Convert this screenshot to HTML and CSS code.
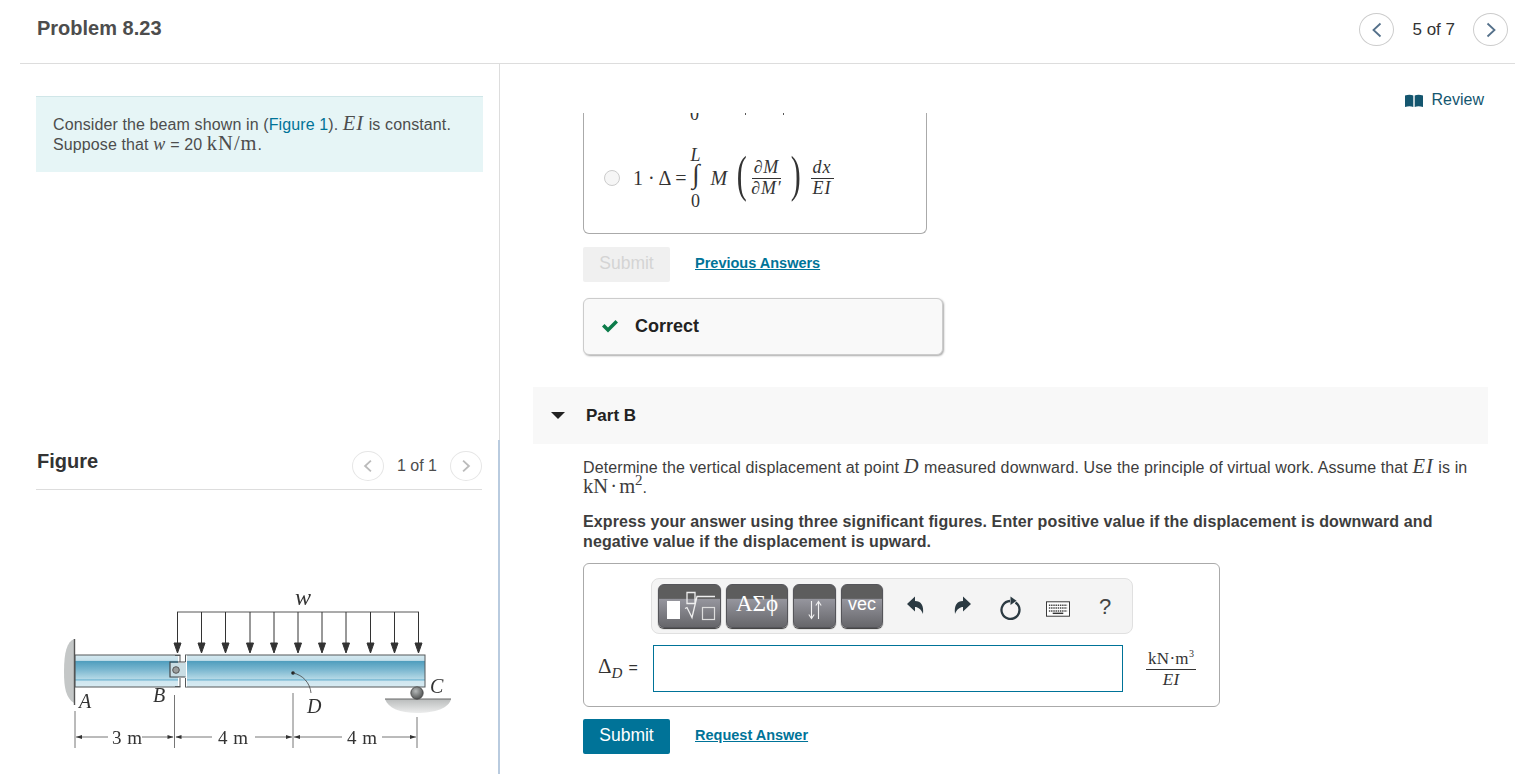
FILE: index.html
```html
<!DOCTYPE html>
<html lang="en">
<head>
<meta charset="utf-8">
<title>Problem 8.23</title>
<link rel="stylesheet" href="styles.css">
</head>
<body>
<header class="top">
  <h1 class="title">Problem 8.23</h1>
  <nav class="pager">
    <span class="circle"><svg width="12" height="16" viewBox="0 0 12 16"><path d="M9.5 1.5 2.5 8l7 6.5" class="chev"/></svg></span>
    <span class="pager-text">5 of 7</span>
    <span class="circle"><svg width="12" height="16" viewBox="0 0 12 16"><path d="M2.5 1.5 9.5 8l-7 6.5" class="chev"/></svg></span>
  </nav>
</header>
<div class="main">
  <aside class="left">
    <section class="left-top">
      <div class="intro">
        Consider the beam shown in (<a class="plain-link">Figure 1</a>). <span class="m i big">EI</span> is constant.<br>
        Suppose that <span class="m i var">w</span> = 20 <span class="m big">kN/m</span>.
      </div>
    </section>
    <section class="left-fig">
      <div class="fig-head">
        <h2 class="fig-title">Figure</h2>
        <div class="fig-pager">
          <span class="circle small"><svg width="10" height="14" viewBox="0 0 12 16"><path d="M9.5 1.5 2.5 8l7 6.5" class="chev faded"/></svg></span>
          <span class="fig-count">1 of 1</span>
          <span class="circle small"><svg width="10" height="14" viewBox="0 0 12 16"><path d="M2.5 1.5 9.5 8l-7 6.5" class="chev faded"/></svg></span>
        </div>
      </div>
      <svg class="beam" width="460" height="194" viewBox="0 0 460 194">
        <defs>
          <linearGradient id="bg" x1="0" y1="0" x2="0" y2="1">
            <stop offset="0" stop-color="#d5e9f0"/><stop offset=".17" stop-color="#c6e0ea"/>
            <stop offset=".19" stop-color="#4f9dbd"/><stop offset=".45" stop-color="#79b6cf"/>
            <stop offset=".75" stop-color="#b5d9e6"/><stop offset=".78" stop-color="#59a8cb"/>
            <stop offset=".81" stop-color="#cfe6ef"/><stop offset="1" stop-color="#d8ebf2"/>
          </linearGradient>
          <linearGradient id="gr" x1="0" y1="0" x2="0" y2="1">
            <stop offset="0" stop-color="#b9bcbc"/><stop offset="1" stop-color="#eceded"/>
          </linearGradient>
          <radialGradient id="ball" cx=".4" cy=".35" r=".7">
            <stop offset="0" stop-color="#b5b8b8"/><stop offset="1" stop-color="#4a4c4c"/>
          </radialGradient>
          <path id="ar" d="M0 0V34M-3.5 31 0 41l3.5-10z"/>
        </defs>
        <g class="soft">
          <path d="M54 59C47 62 44 72 44 92c0 16 2 26 10 31z" fill="#c4c7c7"/>
          <rect x="55" y="75" width="105" height="32" fill="url(#bg)" stroke="#55595b" stroke-width="1"/>
          <rect x="165.500" y="75" width="239.500" height="32" fill="url(#bg)" stroke="#55595b" stroke-width="1"/>
          <rect x="158" y="75.500" width="9" height="31" fill="#fff"/>
          <path d="M160 75v7M160 107v-9M165.500 75v7M165.500 107v-9M160 75.500H155M160 106.500H155" fill="none" stroke="#55595b"/>
          <rect x="150" y="83" width="16" height="14" fill="#c9dde4"/>
          <path d="M160 82h-10v15h10M160 82h5.500M160 97h5.500" fill="none" stroke="#45494b" stroke-width="1.200"/>
          <circle cx="156" cy="90" r="3.300" fill="#9a9d9d" stroke="#555"/>
          <path d="M54.500 59V125" stroke="#555" stroke-width="1.400"/>
          <path d="M157 32H399" stroke="#444" stroke-width=".9"/>
          <g fill="#333" stroke="#333" stroke-width="1">
            <use href="#ar" x="157.500" y="32"/><use href="#ar" x="181.500" y="32"/><use href="#ar" x="205.500" y="32"/>
            <use href="#ar" x="230" y="32"/><use href="#ar" x="254" y="32"/><use href="#ar" x="278" y="32"/>
            <use href="#ar" x="302" y="32"/><use href="#ar" x="326" y="32"/><use href="#ar" x="350.500" y="32"/>
            <use href="#ar" x="374.500" y="32"/><use href="#ar" x="398.500" y="32"/>
          </g>
          <path d="M365 119H431C429 128 415 133 397 133 380 133 368 128 365 119z" fill="url(#gr)"/>
          <path d="M365 119H431" stroke="#666" stroke-width="1"/>
          <circle cx="397" cy="113" r="6.200" fill="url(#ball)" stroke="#444" stroke-width=".8"/>
          <circle cx="273" cy="93" r="1.800" fill="#222"/>
          <path d="M273 93C283 95 290 103 291 113" fill="none" stroke="#444" stroke-width=".8"/>
          <g stroke="#666" stroke-width=".9" fill="none">
            <path d="M55 131V168M154.500 115V168M273 113V168M397 137V168"/>
            <path d="M56 157H88M122 157H153M156 157H192M235 157H272M274 157H322M362 157H396"/>
          </g>
          <g fill="#333">
            <path d="M56 157l6-2v4zM153.500 157l-6-2v4zM155.500 157l6-2v4zM272 157l-6-2v4zM274 157l6-2v4zM396 157l-6-2v4z"/>
          </g>
          <g class="fig-label">
            <text x="275" y="25" class="fl-w">w</text>
            <text x="59" y="128">A</text>
            <text x="133" y="122">B</text>
            <text x="287" y="133">D</text>
            <text x="410" y="113">C</text>
          </g>
          <g class="fig-dim">
            <text x="92" y="164">3 m</text>
            <text x="198" y="164">4 m</text>
            <text x="327" y="164">4 m</text>
          </g>
        </g>
      </svg>
    </section>
  </aside>
  <main class="right">
    <div class="review-row">
      <a class="review"><svg width="18" height="13" viewBox="0 0 18 13"><path d="M0 1.500C3 .5 6 .5 8.300 1.500V13C6 12 3 12 0 13zM9.700 1.500C12 .5 15 .5 18 1.500V13C15 12 12 12 9.700 13z" fill="#14566f"/></svg>Review</a>
    </div>
    <div class="indent">
      <div class="clip">
        <div class="choices">
          <div class="cut-line"><span class="m cut-zero">0</span><span class="speck s1"></span><span class="speck s2"></span></div>
          <div class="choice">
            <span class="radio"></span>
            <span class="m eq">1 · Δ =</span>
            <span class="integral m"><span class="i lim">L</span><span class="int-sign">∫</span><span class="lim">0</span></span>
            <span class="m i eq-m">M</span>
            <span class="m paren">(</span>
            <span class="frac m"><span class="num">∂<span class="i">M</span></span><span class="den">∂<span class="i">M′</span></span></span>
            <span class="m paren">)</span>
            <span class="frac m gap-l"><span class="num i">dx</span><span class="den i">EI</span></span>
          </div>
        </div>
      </div>
      <div class="actions actions-first">
        <button class="btn disabled">Submit</button>
        <a class="link-bold">Previous Answers</a>
      </div>
      <div class="correct">
        <svg width="18" height="14" viewBox="0 0 18 14"><path d="M1 7.500 3.500 5l3.500 3.500L14.500 1 17 3.500 7 13.500z" fill="#0c7c4a"/></svg>
        <span>Correct</span>
      </div>
    </div>
    <div class="part-bar">
      <span class="tri"></span>
      <span class="part-name">Part B</span>
    </div>
    <div class="indent part-body">
      <p class="q">Determine the vertical displacement at point <span class="m i big">D</span> measured downward. Use the principle of virtual work. Assume that <span class="m i big">EI</span> is in <span class="m big nowrap tight">kN · m<sup class="sup">2</sup></span>.</p>
      <p class="q-bold">Express your answer using three significant figures. Enter positive value if the displacement is downward and negative value if the displacement is upward.</p>
      <div class="answer">
        <div class="toolbar">
          <button class="tb w-a">
            <span class="tpl-block"></span>
            <span class="tpl-root">
              <svg width="32" height="30" viewBox="0 0 32 30"><path d="M3 1.500h8v11H3zM1 17.500l2-1 5 10L13 5.500h18" fill="none" stroke="#eee" stroke-width="1.300"/><rect x="18.500" y="16.500" width="12" height="12" fill="none" stroke="#ddd" stroke-width="1.200"/></svg>
            </span>
          </button>
          <button class="tb w-b"><span class="greek">ΑΣϕ</span></button>
          <button class="tb w-c"><svg width="14" height="20" viewBox="0 0 14 20"><path d="M3.500 1V18.500M.8 14.500 3.500 18.500 6.200 14.500M10.500 19V1.500M7.800 5.500 10.500 1.500 13.200 5.500" fill="none" stroke="#f2f2f2" stroke-width="1.100"/></svg></button>
          <button class="tb w-d">vec</button>
          <span class="tool t1"><svg width="18" height="20" viewBox="0 0 18 20"><path d="M1 9 9 1.500V6c6 0 9 4 8 13-2-5-5-7-8-7v4.500z" fill="#2b3a42"/></svg></span>
          <span class="tool t2"><svg width="18" height="20" viewBox="0 0 18 20"><path d="M17 9 9 1.500V6C3 6 0 10 1 19c2-5 5-7 8-7v4.500z" fill="#2b3a42"/></svg></span>
          <span class="tool t3"><svg width="22" height="24" viewBox="0 0 22 24"><path d="M15.500 6.500A9 9 0 1 1 10 5" fill="none" stroke="#2b3a42" stroke-width="2.300"/><path d="M10.500 .5 16.500 4.700 10.500 9z" fill="#2b3a42"/></svg></span>
          <span class="tool t4"><svg width="25" height="16" viewBox="0 0 25 16"><rect x=".5" y=".5" width="24" height="15" fill="#fff" stroke="#333"/><path d="M3 4h19M3 7h19M3 10h19" stroke="#444" stroke-width="1.500" stroke-dasharray="1.500 .8"/><path d="M7 12.500h11" stroke="#333" stroke-width="1.500"/></svg></span>
          <span class="tool t5">?</span>
        </div>
        <div class="answer-row">
          <span class="m delta">Δ<sub class="i sub-d">D</sub> <span class="eqs">=</span></span>
          <input class="ans-input" type="text" aria-label="answer">
          <span class="frac m unit"><span class="num">kN·m<sup class="sup3">3</sup></span><span class="den i">EI</span></span>
        </div>
      </div>
      <div class="actions">
        <button class="btn primary">Submit</button>
        <a class="link-bold">Request Answer</a>
      </div>
    </div>
  </main>
</div>
</body>
</html>
```
FILE: styles.css
```css
* { box-sizing: border-box; }
html, body { margin: 0; height: 774px; overflow: hidden; background: #fff; }
body { font-family: "Liberation Sans", Arial, sans-serif; font-size: 16px; color: #333; line-height: 20px; }

.top { margin-left: 20px; height: 64px; border-bottom: 1px solid #ddd; display: flex; align-items: center; justify-content: space-between; padding: 0 7px 8px 17px; }
.title { margin: 0; font-size: 20px; font-weight: 700; color: #4d4d4d; line-height: 24px; }
.pager { display: flex; align-items: center; gap: 18px; margin-top: 4px; }
.pager-text { font-size: 17px; color: #333; }
.circle { width: 35px; height: 33px; border: 1px solid #ccc; border-radius: 50%; display: flex; align-items: center; justify-content: center; background: #fff; }
.circle.small { width: 32px; height: 30px; border-color: #e6e6e6; }
.chev { fill: none; stroke: #54708a; stroke-width: 1.800; }
.chev.faded { stroke: #bbb; stroke-width: 2.200; }

.main { display: flex; height: 710px; }
.left { width: 500px; display: flex; flex-direction: column; flex: none; }
.left-top { height: 376px; padding: 32px 16px 0 36px; border-right: 1px solid #ddd; }
.intro { background: #e6f5f6; border-top: 1px solid #d0e6e8; height: 76px; padding: 18px 17px; color: #4d4d4d; letter-spacing: .11px; }
.plain-link { color: #007398; }
.left-fig { flex: 1; padding: 0 16px 0 36px; border-right: 2px solid #b9cbdf; position: relative; }
.fig-head { display: flex; align-items: center; justify-content: space-between; height: 50px; border-bottom: 1px solid #ddd; }
.fig-title { margin: 0 0 0 1px; font-size: 20px; font-weight: 700; color: #333; position: relative; top: -4px; }
.fig-pager { display: flex; align-items: center; gap: 13px; margin-top: 2px; }
.fig-count { color: #4d4d4d; }
.beam { position: absolute; left: 20px; top: 140px; }
.soft { filter: blur(.45px); }
.fig-label text { font: italic 20px "Liberation Serif", serif; fill: #333; }
.fig-label .fl-w { font-size: 24px; }
.fig-dim text { font: 19px "Liberation Serif", serif; fill: #333; letter-spacing: .5px; }

.m { font-family: "Liberation Serif", "Times New Roman", serif; line-height: 0; }
.i { font-style: italic; }
.big { font-size: 20.500px; letter-spacing: 1px; }
.var { font-size: 18px; letter-spacing: .5px; }
.nowrap { white-space: nowrap; }
.tight { letter-spacing: 0; word-spacing: -3px; }

.right { flex: 1; min-width: 0; padding: 0 27px 0 33px; }
.review-row { display: flex; justify-content: flex-end; height: 49px; padding: 26px 4px 0 0; }
.review { color: #14566f; display: flex; align-items: center; gap: 9px; height: 20px; }
.indent { padding-left: 50px; }

.clip { width: 344px; height: 121px; overflow: hidden; border: 1px solid #aaa; border-top: 0; border-radius: 0 0 6px 6px; }
.cut-line { display: flex; align-items: flex-start; height: 10px; overflow: hidden; }
.cut-zero { font-size: 18px; margin-left: 106px; line-height: 10px; transform: translateY(-4px); }
.speck { width: 1px; height: 2px; background: #555; flex: none; }
.s1 { margin-left: 46px; }
.s2 { margin-left: 37px; }
.choice { display: flex; align-items: center; padding: 17px 0 0 20px; height: 93px; font-size: 18px; color: #333; }
.radio { width: 16px; height: 16px; border: 1px solid #ccc; border-radius: 50%; background: #f6f6f6; margin-right: 13px; flex: none; }
.eq { font-size: 20px; white-space: nowrap; }
.integral { display: inline-flex; flex-direction: column; align-items: center; width: 18px; margin: 0 7px 0 0; line-height: 1; }
.integral .lim { font-size: 18px; line-height: 18px; }
.int-sign { font-size: 27px; line-height: 28px; transform: translateY(-4px); }
.eq-m { font-size: 20px; letter-spacing: 1px; margin-left: -1px; }
.paren { font-size: 50px; line-height: 40px; transform: scaleX(.6); width: 14px; margin: 0 3px 0 6px; text-align: center; position: relative; top: -4px; }
.frac { display: inline-flex; flex-direction: column; align-items: center; font-size: 18px; line-height: 19px; letter-spacing: .8px; }
.num { border-bottom: 1px solid #333; padding: 0 2px 1px; }
.gap-l { margin-left: 6px; letter-spacing: 1px; }

.actions { display: flex; align-items: center; gap: 25px; height: 35px; }
.actions-first { margin-top: 13px; }
.btn { height: 35px; width: 87px; border: 0; border-radius: 2px; font: 17.500px "Liberation Sans", Arial, sans-serif; padding: 0 0 2px; }
.btn.disabled { background: #f0f0f0; color: #d4d4d4; }
.btn.primary { background: #007398; color: #fff; }
.link-bold { color: #007398; font-weight: 700; text-decoration: underline; font-size: 14.500px; padding-bottom: 3px; }

.correct { width: 360px; height: 57px; margin-top: 16px; padding: 0 0 2px 17px; border: 1px solid #ccc; border-radius: 6px; background: #f9f9f9; box-shadow: 1px 1px 2px #aaa; display: flex; align-items: center; gap: 16px; font-size: 18px; font-weight: 700; color: #222; }

.part-bar { height: 57px; margin-top: 32px; background: #f8f8f8; display: flex; align-items: center; padding-left: 18px; }
.tri { width: 0; height: 0; border-left: 7px solid transparent; border-right: 7px solid transparent; border-top: 7px solid #222; margin-right: 21px; }
.part-name { font-weight: 700; color: #222; font-size: 17px; }

.q { margin: 14px 0 0; width: 905px; color: #3d3d3d; letter-spacing: .11px; }
.sup { font-size: 15px; line-height: 0; letter-spacing: 0; }
.q-bold { margin: 14px 0 0; width: 880px; font-weight: 700; color: #3d3d3d; letter-spacing: .11px; }

.answer { width: 637px; height: 144px; margin-top: 11px; margin-bottom: 12px; border: 1px solid #aaa; border-radius: 6px; padding: 14px 14px 0; }
.toolbar { display: flex; align-items: center; width: 482px; height: 56px; margin-left: 53px; padding-left: 6px; border: 1px solid #e0e0e0; border-radius: 8px; background: #f4f4f4; }
.tb { height: 44px; margin-right: 5px; padding: 0; border: 1px solid #55555a; border-radius: 6px; color: #fff; background: linear-gradient(#5d5d5d 0, #5d5d5d 32%, #96969e 33%, #66666a 100%); font: 23px "Liberation Serif", serif; display: flex; align-items: center; justify-content: center; box-shadow: 0 1px 1px #333; }
.w-a { width: 63px; justify-content: flex-start; align-items: flex-start; padding: 16px 0 0 8px; gap: 4px; }
.w-b { width: 62px; }
.greek { position: relative; top: -2px; }
.w-c { width: 43px; padding-top: 8px; }
.w-d { width: 42px; font: 18px "Liberation Sans", Arial, sans-serif; align-items: flex-start; padding-top: 9px; }
.tpl-block { width: 13px; height: 18px; background: #fff; flex: none; }
.tpl-root { display: block; height: 30px; margin-top: -10px; flex: none; }
.tool { display: flex; align-items: center; justify-content: center; width: 24px; flex: none; }
.t1 { margin: 0 0 3px 15px; }
.t2 { margin: 0 0 3px 24px; }
.t3 { margin: 3px 0 0 24px; }
.t4 { margin: 6px 0 0 23px; }
.t5 { margin: 1px 0 0 23px; font-size: 22px; color: #444; }

.answer-row { display: flex; align-items: center; height: 48px; margin-top: 10px; }
.delta { width: 55px; padding-top: 4px; font-size: 21px; white-space: nowrap; flex: none; }
.sub-d { font-size: 15px; }
.eqs { font-family: "Liberation Sans", sans-serif; font-size: 16px; margin-left: 1px; }
.ans-input { width: 470px; height: 47px; border: 1px solid #007398; background: #fff; outline: 0; flex: none; }
.unit { margin: 2px 0 0 23px; font-size: 17px; line-height: 19px; letter-spacing: .3px; }
.sup3 { font-size: 10px; line-height: 0; }
```
